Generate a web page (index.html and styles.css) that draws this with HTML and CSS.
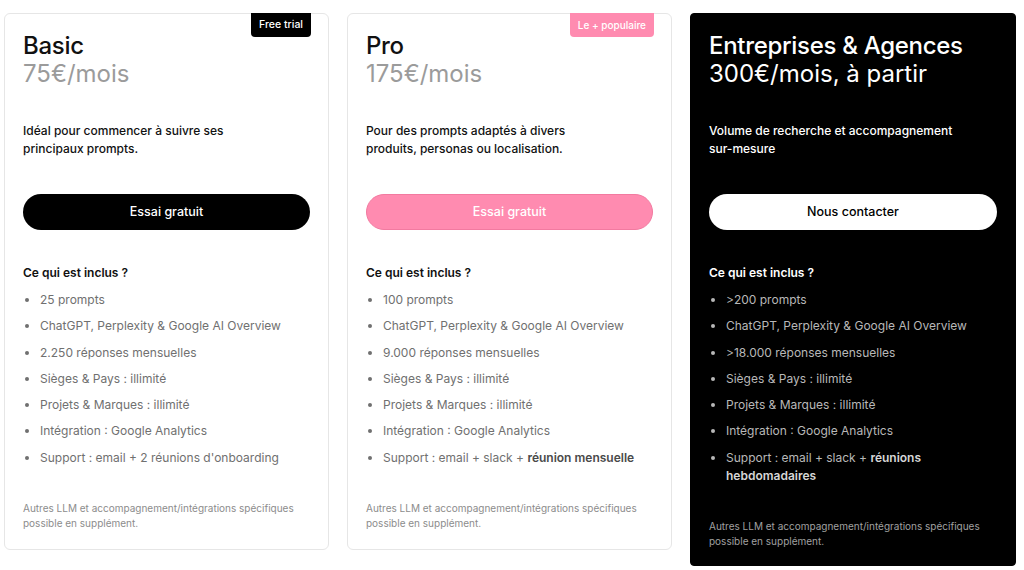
FILE: index.html
```html
<!DOCTYPE html>
<html lang="fr">
  <head>
    <meta charset="utf-8">
    <title>Tarifs</title>
    <link rel="stylesheet" href="styles.css">
  </head>
  <body>
    <div class="plans">
      <div class="plan">
        <span class="badge">Free trial</span>
        <h2 class="name">Basic</h2>
        <p class="price">75€/mois</p>
        <p class="desc">Idéal pour commencer à suivre ses principaux prompts.</p>
        <a class="cta cta-dark" href="#">Essai gratuit</a>
        <h3 class="incl">Ce qui est inclus ?</h3>
        <ul class="features">
          <li>25 prompts</li>
          <li>ChatGPT, Perplexity &amp; Google AI Overview</li>
          <li>2.250 réponses mensuelles</li>
          <li>Sièges &amp; Pays : illimité</li>
          <li>Projets &amp; Marques : illimité</li>
          <li>Intégration : Google Analytics</li>
          <li>Support : email + 2 réunions d'onboarding</li>
        </ul>
        <p class="note">Autres LLM et accompagnement/intégrations spécifiques possible en supplément.</p>
      </div>

      <div class="plan">
        <span class="badge badge-pink">Le + populaire</span>
        <h2 class="name">Pro</h2>
        <p class="price">175€/mois</p>
        <p class="desc">Pour des prompts adaptés à divers produits, personas ou localisation.</p>
        <a class="cta cta-pink" href="#">Essai gratuit</a>
        <h3 class="incl">Ce qui est inclus ?</h3>
        <ul class="features">
          <li>100 prompts</li>
          <li>ChatGPT, Perplexity &amp; Google AI Overview</li>
          <li>9.000 réponses mensuelles</li>
          <li>Sièges &amp; Pays : illimité</li>
          <li>Projets &amp; Marques : illimité</li>
          <li>Intégration : Google Analytics</li>
          <li>Support : email + slack + <b>réunion mensuelle</b></li>
        </ul>
        <p class="note">Autres LLM et accompagnement/intégrations spécifiques possible en supplément.</p>
      </div>

      <div class="plan plan-black">
        <h2 class="name">Entreprises &amp; Agences</h2>
        <p class="price">300€/mois, à partir</p>
        <p class="desc">Volume de recherche et accompagnement sur-mesure</p>
        <a class="cta cta-light" href="#">Nous contacter</a>
        <h3 class="incl">Ce qui est inclus ?</h3>
        <ul class="features">
          <li>&gt;200 prompts</li>
          <li>ChatGPT, Perplexity &amp; Google AI Overview</li>
          <li>&gt;18.000 réponses mensuelles</li>
          <li>Sièges &amp; Pays : illimité</li>
          <li>Projets &amp; Marques : illimité</li>
          <li>Intégration : Google Analytics</li>
          <li>Support : email + slack + <b>réunions hebdomadaires</b></li>
        </ul>
        <p class="note">Autres LLM et accompagnement/intégrations spécifiques possible en supplément.</p>
      </div>
    </div>
  </body>
</html>
```

FILE: styles.css
```css
body {
  margin: 0;
  padding: 13px 0 0 4px;
  background: #fff;
  font-family: Inter, "Noto Sans", sans-serif;
  color: #111;
}
.plans {
  width: 1012px;
  display: grid;
  grid-template-columns: 325px 325px 326px;
  gap: 18px;
  align-items: start;
}
.plan {
  position: relative;
  border: 1px solid #e6e6e6;
  border-radius: 6px;
  padding: 18px;
}
.plan-black {
  background: #000;
  border-color: #000;
  color: #fff;
  border-radius: 4px;
  padding-bottom: 16px;
}
.badge {
  position: absolute;
  top: -1px;
  right: 17px;
  background: #000;
  color: #fff;
  font-size: 10.5px;
  font-weight: 500;
  line-height: 24px;
  padding: 0 8px;
  border-radius: 0 0 4px 4px;
}
.badge-pink {
  background: #ff8bb0;
  padding: 0 8px;
  font-size: 10px;
}
.name, .price {
  margin: 0;
  font-size: 24px;
  font-weight: 500;
  line-height: 28px;
  letter-spacing: -0.3px;
}
.price {
  color: #9b9b9b;
  font-weight: 400;
  letter-spacing: 0;
}
.plan-black .price {
  color: #fff;
}
.desc {
  margin: 34px 0 0;
  max-width: 248px;
  font-size: 12px;
  font-weight: 500;
  line-height: 18px;
}
.cta {
  display: block;
  margin-top: 36px;
  height: 36px;
  line-height: 36px;
  border-radius: 18px;
  text-align: center;
  font-size: 12.5px;
  font-weight: 500;
  text-decoration: none;
  box-sizing: border-box;
}
.cta-dark {
  background: #000;
  color: #fff;
}
.cta-pink {
  background: #ff8bb0;
  color: #fff;
  border: 1px solid #f27aa0;
  line-height: 34px;
}
.cta-light {
  background: #fff;
  color: #000;
}
.incl {
  margin: 34px 0 0;
  font-size: 12px;
  font-weight: 600;
  line-height: 18px;
}
.features {
  margin: 9px 0 0;
  padding-left: 17px;
  color: #707070;
  font-size: 12px;
  line-height: 18px;
}
.features li {
  margin-bottom: 8.3px;
}
.features li:last-child {
  margin-bottom: 0;
}
.features b {
  color: #4a4a4a;
  font-weight: 600;
}
.plan-black .features {
  color: #b8b8b8;
}
.plan-black .features b {
  color: #d6d6d6;
}
.note {
  margin: 34px 0 0;
  color: #8c8c8c;
  font-size: 10px;
  line-height: 15px;
}
.plan-black .note {
  color: #a0a0a0;
}
```
